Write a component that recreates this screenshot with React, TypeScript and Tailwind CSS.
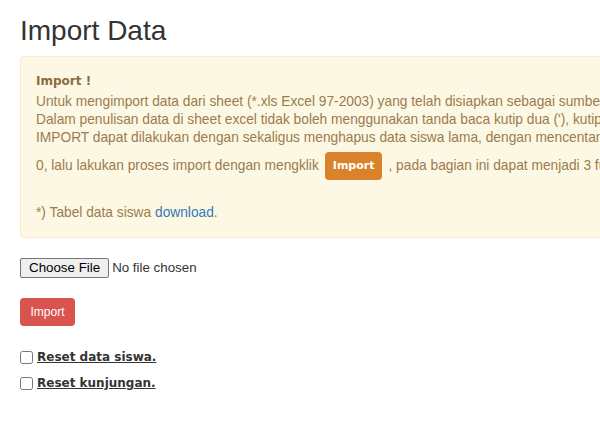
export default function App() {
  return (
    <div className="w-[600px] h-[424px] overflow-hidden bg-white font-['Liberation_Sans',Arial,sans-serif] text-[#333]">
      <div className="w-[1000px] px-5">
        <h1 className="pt-[14px] text-[28px] leading-[34px] text-[#333]">Import Data</h1>

        <div className="mt-[8px] rounded border border-[#faebcc] bg-[#fcf8e3] px-[15px] pt-[15px] pb-[15px] text-[13.75px] leading-[18px] text-[#9a7c50] whitespace-nowrap">
          <p className="font-['DejaVu_Sans',sans-serif] text-[12px] font-bold text-[#8a6d3b]">Import !</p>
          <p className="mt-[3px]">
            Untuk mengimport data dari sheet (*.xls Excel 97-2003) yang telah disiapkan sebagai sumber data siswa, silahkan pilih file lalu klik tombol import.
          </p>
          <p>
            Dalam penulisan data di sheet excel tidak boleh menggunakan tanda baca kutip dua ('), kutip satu ("), maupun tanda koma.
          </p>
          <p>
            IMPORT dapat dilakukan dengan sekaligus menghapus data siswa lama, dengan mencentang pilihan reset data siswa hingga data menjadi
          </p>
          <p className="mt-[5px] flex items-center">
            <span>0, lalu lakukan proses import dengan mengklik</span>
            <span className="mx-[6px] inline-flex h-[28px] items-center rounded bg-[#d9822b] px-[8px] font-['DejaVu_Sans',sans-serif] text-[11px] font-bold text-white">
              Import
            </span>
            <span>, pada bagian ini dapat menjadi 3 fungsi yaitu tambah data, ubah data dan hapus data.</span>
          </p>
          <p className="mt-[24px]">
            *) Tabel data siswa <a className="text-[#337ab7]">download</a>.
          </p>
        </div>

        <div className="mt-[20px] flex h-[20px] items-center">
          <input type="file" className="text-[13.33px] leading-[18px] text-[#333] file:mr-[3px] file:h-[20px] file:rounded-[2px] file:border file:border-[#767676] file:bg-[#efefef] file:px-[8px] file:py-0 file:text-black" />
        </div>

        <button className="mt-[20px] h-[28px] w-[55px] rounded bg-[#d9534f] text-[12px] text-white">Import</button>

        <div className="mt-[22px] flex flex-col gap-[8px]">
          <label className="flex items-center gap-[4px] font-['DejaVu_Sans',sans-serif] text-[12px] font-bold text-[#333]">
            <input type="checkbox" className="h-[13px] w-[13px]" />
            <span className="underline">Reset data siswa.</span>
          </label>
          <label className="flex items-center gap-[4px] font-['DejaVu_Sans',sans-serif] text-[12px] font-bold text-[#333]">
            <input type="checkbox" className="h-[13px] w-[13px]" />
            <span className="underline">Reset kunjungan.</span>
          </label>
        </div>
      </div>
    </div>
  );
}
